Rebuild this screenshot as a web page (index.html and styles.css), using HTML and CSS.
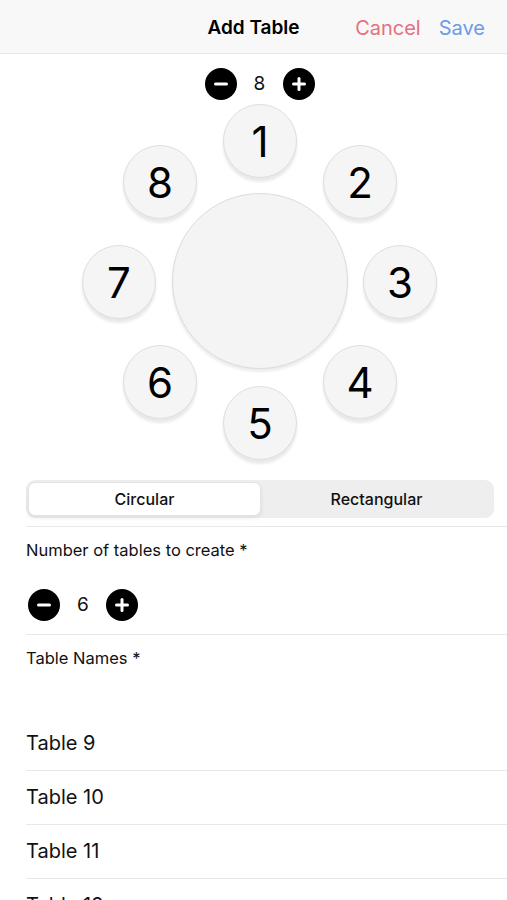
FILE: index.html
```html
<!DOCTYPE html>
<html lang="en">
<head>
    <meta charset="utf-8">
    <title>Add Table</title>
    <meta name="viewport" content="width=device-width, initial-scale=1">
    <link rel="stylesheet" href="styles.css">
</head>
<body>

<header class="nav-bar">
    <h1 class="nav-title">Add Table</h1>
    <div class="nav-actions">
        <button class="nav-btn cancel">Cancel</button>
        <button class="nav-btn save">Save</button>
    </div>
</header>

<main class="content">

    <div class="stepper stepper-seats">
        <span class="step-btn">
            <svg viewBox="0 0 32 32" width="32" height="32"><circle cx="16" cy="16" r="16" fill="#000"/><rect x="9" y="14.5" width="14" height="3" rx="1.5" fill="#fff"/></svg>
        </span>
        <span class="step-value">8</span>
        <span class="step-btn">
            <svg viewBox="0 0 32 32" width="32" height="32"><circle cx="16" cy="16" r="16" fill="#000"/><rect x="9" y="14.5" width="14" height="3" rx="1.5" fill="#fff"/><rect x="14.5" y="9" width="3" height="14" rx="1.5" fill="#fff"/></svg>
        </span>
    </div>

    <!-- стіл зі стільцями: позиції стільців це і є зміст -->
    <div class="table-plan">
        <div class="table-top"></div>
        <div class="seat" style="left: 223px; top: 0px;">1</div>
        <div class="seat" style="left: 323px; top: 41px;">2</div>
        <div class="seat" style="left: 363px; top: 141px;">3</div>
        <div class="seat" style="left: 323px; top: 241px;">4</div>
        <div class="seat" style="left: 223px; top: 282px;">5</div>
        <div class="seat" style="left: 123px; top: 241px;">6</div>
        <div class="seat" style="left: 82px; top: 141px;">7</div>
        <div class="seat" style="left: 123px; top: 41px;">8</div>
    </div>

    <div class="segmented">
        <button class="segment active">Circular</button>
        <button class="segment">Rectangular</button>
    </div>

    <section class="form-row">
        <div class="form-label">Number of tables to create *</div>
        <div class="stepper stepper-count">
            <span class="step-btn">
                <svg viewBox="0 0 32 32" width="32" height="32"><circle cx="16" cy="16" r="16" fill="#000"/><rect x="9" y="14.5" width="14" height="3" rx="1.5" fill="#fff"/></svg>
            </span>
            <span class="step-value">6</span>
            <span class="step-btn">
                <svg viewBox="0 0 32 32" width="32" height="32"><circle cx="16" cy="16" r="16" fill="#000"/><rect x="9" y="14.5" width="14" height="3" rx="1.5" fill="#fff"/><rect x="14.5" y="9" width="3" height="14" rx="1.5" fill="#fff"/></svg>
            </span>
        </div>
    </section>

    <section class="form-row names">
        <div class="form-label">Table Names *</div>
        <ul class="name-list">
            <li>Table 9</li>
            <li>Table 10</li>
            <li>Table 11</li>
            <li>Table 12</li>
        </ul>
    </section>

</main>

</body>
</html>
```

FILE: styles.css
```css
body {
    font: normal 16px/1.25 Inter, "Liberation Sans", sans-serif;
    color: #111;
    margin: 0;
    padding: 0;
    background: #fff;
    overflow: hidden;
}

.nav-bar {
    height: 50px;
    padding-top: 3px;
    background: #f8f8f8;
    border-bottom: 1px solid #e6e6e6;
    display: flex;
    align-items: center;
    justify-content: center;
    position: relative;
}

    .nav-title {
        margin: 0;
        font-size: 19px;
        font-weight: 600;
        color: #000;
    }

    .nav-actions {
        position: absolute;
        right: 22px;
        top: 3px;
        height: 50px;
        display: flex;
        align-items: center;
        gap: 18px;
    }

        .nav-btn {
            border: none;
            background: none;
            padding: 0;
            font: inherit;
            font-size: 20px;
        }

        .nav-btn.cancel {
            color: #e66f80;
        }

        .nav-btn.save {
            color: #6d9be6;
        }

.content {
    display: flex;
    flex-direction: column;
}

.stepper {
    display: flex;
    align-items: center;
}

    .step-btn {
        display: block;
        width: 32px;
        height: 32px;
    }

        .step-btn svg {
            display: block;
        }

    .step-value {
        font-size: 19px;
        text-align: center;
    }

.stepper-seats {
    justify-content: center;
    margin-top: 14px;
    margin-left: 12px;
    gap: 15px;
}

    .stepper-seats .step-value {
        width: 16px;
    }

.table-plan {
    position: relative;
    width: 507px;
    height: 362px;
    margin-top: 4px;
}

    .table-top {
        position: absolute;
        left: 172px;
        top: 89px;
        width: 174px;
        height: 174px;
        border-radius: 50%;
        background: #f4f4f4;
        border: 1px solid #dcdcdc;
        box-shadow: 0 3px 3px rgba(0, 0, 0, 0.08);
    }

    .seat {
        position: absolute;
        width: 74px;
        height: 74px;
        padding-top: 3px;
        box-sizing: border-box;
        border-radius: 50%;
        background: #f5f5f5;
        border: 1px solid #dedede;
        box-shadow: 0 4px 3px rgba(0, 0, 0, 0.09);
        display: flex;
        align-items: center;
        justify-content: center;
        font-size: 42px;
        font-weight: 400;
        color: #000;
    }

.segmented {
    margin: 14px 13px 0 26px;
    height: 38px;
    background: #eeeeef;
    border-radius: 9px;
    display: flex;
    padding: 2px;
    box-sizing: border-box;
}

    .segment {
        flex: 1;
        border: none;
        background: none;
        font: inherit;
        font-size: 16px;
        font-weight: 500;
        color: #111;
        border-radius: 7px;
        padding: 0;
    }

    .segment.active {
        background: #fff;
        border: 1px solid #e4e4e4;
        box-shadow: 0 2px 4px rgba(0, 0, 0, 0.08);
    }

.form-row {
    margin-left: 26px;
    border-top: 1px solid #e8e8e8;
}

.segmented + .form-row {
    margin-top: 8px;
}

    .form-label {
        font-size: 16.5px;
        margin-top: 13px;
        color: #111;
    }

.stepper-count {
    margin-top: 28px;
    margin-bottom: 13px;
    margin-left: 2px;
    gap: 0;
}

    .stepper-count .step-value {
        width: 46px;
    }

.name-list {
    list-style: none;
    margin: 68px 0 0 0;
    padding: 0;
}

    .name-list li {
        font-size: 20px;
        height: 53px;
        line-height: 53px;
        border-bottom: 1px solid #e8e8e8;
        margin-top: -19px;
        margin-bottom: 19px;
    }
```
